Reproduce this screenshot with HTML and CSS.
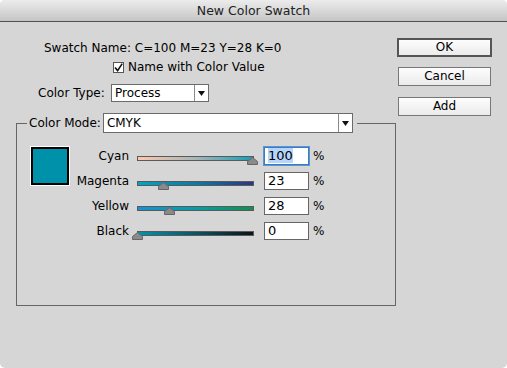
FILE: index.html
```html
<!DOCTYPE html>
<html>
<head>
<meta charset="utf-8">
<link rel="stylesheet" href="styles.css">
</head>
<body>
<div class="window">
  <div class="titlebar">New Color Swatch</div>
  <div class="content">
    <div class="main">
      <div class="name-row">Swatch Name: C=100 M=23 Y=28 K=0</div>
      <div class="check-row">
        <span class="checkbox"><svg width="9" height="9" viewBox="0 0 9 9"><path d="M1 4.5 L3.6 7.6 L8.2 0.6" fill="none" stroke="#111" stroke-width="1.6"/></svg></span>
        <span>Name with Color Value</span>
      </div>
      <div class="type-row">
        <span class="type-lbl">Color Type:</span>
        <div class="select select-type">
          <span class="val">Process</span>
          <span class="arrow"><svg width="7" height="5" viewBox="0 0 7 5"><path d="M0 0 H7 L3.5 5 Z" fill="#111"/></svg></span>
        </div>
      </div>
      <fieldset class="mode">
        <legend><div class="legend-in"><span>Color Mode:</span>
          <div class="select select-mode">
            <span class="val">CMYK</span>
            <span class="arrow"><svg width="7" height="5" viewBox="0 0 7 5"><path d="M0 0 H7 L3.5 5 Z" fill="#111"/></svg></span>
          </div></div>
        </legend>
        <div class="mode-body">
          <div class="swatch"></div>
          <div class="rows">
            <div class="srow">
              <span class="slbl">Cyan</span>
              <div class="slider s-cyan"><svg class="thumb" style="left:100%" width="11" height="8" viewBox="0 0 11 8"><path d="M5.5 0.5 L10.5 4.5 V7.5 H0.5 V4.5 Z" fill="#8a8a8a" stroke="#666"/></svg></div>
              <div class="num focus"><span class="sel">100</span></div>
              <span class="pct">%</span>
            </div>
            <div class="srow">
              <span class="slbl">Magenta</span>
              <div class="slider s-magenta"><svg class="thumb" style="left:23%" width="11" height="8" viewBox="0 0 11 8"><path d="M5.5 0.5 L10.5 4.5 V7.5 H0.5 V4.5 Z" fill="#8a8a8a" stroke="#666"/></svg></div>
              <div class="num">23</div>
              <span class="pct">%</span>
            </div>
            <div class="srow">
              <span class="slbl">Yellow</span>
              <div class="slider s-yellow"><svg class="thumb" style="left:28%" width="11" height="8" viewBox="0 0 11 8"><path d="M5.5 0.5 L10.5 4.5 V7.5 H0.5 V4.5 Z" fill="#8a8a8a" stroke="#666"/></svg></div>
              <div class="num">28</div>
              <span class="pct">%</span>
            </div>
            <div class="srow">
              <span class="slbl">Black</span>
              <div class="slider s-black"><svg class="thumb" style="left:0%" width="11" height="8" viewBox="0 0 11 8"><path d="M5.5 0.5 L10.5 4.5 V7.5 H0.5 V4.5 Z" fill="#8a8a8a" stroke="#666"/></svg></div>
              <div class="num">0</div>
              <span class="pct">%</span>
            </div>
          </div>
        </div>
      </fieldset>
    </div>
    <div class="buttons">
      <div class="btn default">OK</div>
      <div class="btn cancel">Cancel</div>
      <div class="btn add">Add</div>
    </div>
  </div>
</div>
</body>
</html>
```
FILE: styles.css
```css
body {
  margin: 0;
  background: #ffffff;
  font-family: "DejaVu Sans", "Liberation Sans", sans-serif;
  font-size: 12px;
  color: #000;
}
.window {
  width: 507px;
  height: 368px;
  background: #d6d6d6;
  border-radius: 5px;
  overflow: hidden;
}
.titlebar {
  height: 21px;
  line-height: 21px;
  text-align: center;
  background: linear-gradient(#ececec, #c5c5c5);
  border-bottom: 1px solid #505050;
  color: #222;
  font-size: 12.5px;
}
.content {
  display: flex;
  padding-left: 16px;
}
.main {
  width: 381px;
  display: flex;
  flex-direction: column;
}
.name-row {
  margin-top: 18px;
  padding-left: 28px;
  height: 16px;
  line-height: 16px;
}
.check-row {
  margin-top: 3px;
  padding-left: 97px;
  display: flex;
  align-items: center;
  height: 16px;
  gap: 4px;
}
.checkbox {
  width: 11px;
  height: 11px;
  box-sizing: border-box;
  border: 1px solid #555;
  background: #fff;
  display: flex;
  align-items: center;
  justify-content: center;
}
.type-row {
  margin-top: 9px;
  display: flex;
  align-items: center;
  padding-left: 22px;
  height: 18px;
}
.type-lbl {
  width: 73px;
}
.select {
  display: flex;
  align-items: center;
  background: #fff;
  border: 1px solid #6b6b6b;
  box-sizing: border-box;
  height: 18px;
}
.select .val {
  flex: 1;
  padding-left: 3px;
}
.select .arrow {
  width: 13px;
  height: 100%;
  border-left: 1px solid #8a8a8a;
  display: flex;
  align-items: center;
  justify-content: center;
}
.select-type {
  width: 98px;
}
.select-mode {
  width: 250px;
  height: 20px;
  margin-left: 2px;
}
.mode {
  margin: 11px 0 0 0;
  padding: 13px 0 0 13px;
  border: 1px solid #666;
  width: 380px;
  box-sizing: border-box;
  min-width: 0;
}
.mode legend {
  margin-left: -3px;
  padding: 0 4px 0 2px;
}
.legend-in {
  display: flex;
  align-items: center;
}
.mode-body {
  display: flex;
  align-items: flex-start;
  height: 159px;
}
.swatch {
  width: 38px;
  height: 38px;
  box-sizing: border-box;
  margin: 1px 0 0 1px;
  border: 2px solid #000;
  background: #0091aa;
  box-shadow: 0 0 0 1px #fff;
}
.rows {
  margin: 1px 0 0 1px;
  display: flex;
  flex-direction: column;
  gap: 7px;
}
.srow {
  display: flex;
  align-items: flex-start;
  height: 18px;
}
.slbl {
  width: 59px;
  text-align: right;
  line-height: 18px;
}
.slider {
  position: relative;
  margin: 9px 0 0 8px;
  width: 117px;
  height: 5px;
  box-sizing: border-box;
  border: 1px solid #5a5a5a;
}
.thumb {
  position: absolute;
  top: 0;
  margin-left: -6px;
}
.s-cyan { background: linear-gradient(to right, #fdc8ad, #a9b5b6 50%, #0fa2bc); }
.s-magenta { background: linear-gradient(to right, #00a6c2, #0a7aa6 50%, #2d3480); }
.s-yellow { background: linear-gradient(to right, #1a8fd3, #00a0a8 50%, #13904e); }
.s-black { background: linear-gradient(to right, #0094ae, #0a5566 50%, #0a1418); }
.num {
  margin-left: 10px;
  width: 45px;
  height: 18px;
  box-sizing: border-box;
  border: 1px solid #666;
  background: #fff;
  font-size: 13px;
  line-height: 16px;
  padding-left: 3px;
}
.num.focus {
  border-color: #3a7cc4;
  box-shadow: 0 0 0 1px #5d95d2;
}
.sel {
  background: #b5d5fc;
}
.pct {
  margin-left: 4px;
  line-height: 18px;
}
.buttons {
  padding-top: 16px;
  display: flex;
  flex-direction: column;
  width: 95px;
}
.btn {
  height: 19px;
  box-sizing: border-box;
  border: 1px solid #777;
  background: linear-gradient(#fdfdfd, #ebebeb);
  text-align: center;
  line-height: 17px;
  width: 93px;
  margin-left: 1px;
}
.btn.default {
  border: 2px solid #555;
  width: 95px;
  margin-left: 0;
  line-height: 15px;
}
.btn.cancel {
  margin-top: 10px;
}
.btn.add {
  margin-top: 11px;
}
```
